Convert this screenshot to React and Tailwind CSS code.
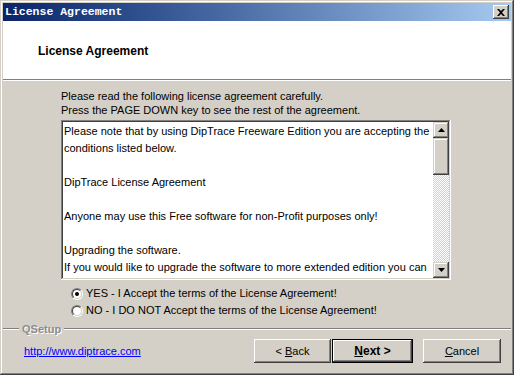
import React from "react";

const raised =
  "shadow-[inset_-1px_-1px_#404040,inset_1px_1px_#d4d0c8,inset_-2px_-2px_#808080,inset_2px_2px_#ffffff]";
const btnRaised =
  "shadow-[inset_-1px_-1px_#404040,inset_1px_1px_#ffffff,inset_-2px_-2px_#808080,inset_2px_2px_#d4d0c8]";

function CloseBtn() {
  return (
    <div className={`w-[16px] h-[14px] bg-[#d4d0c8] flex items-center justify-center ${btnRaised}`}>
      <svg width="8" height="7" viewBox="0 0 8 7">
        <path d="M0 0h2l2 2 2-2h2L5 3.5 8 7H6L4 5 2 7H0l3-3.5z" fill="#000" />
      </svg>
    </div>
  );
}

function ScrollBtn({ down }) {
  return (
    <div className={`w-[16px] h-[16px] bg-[#d4d0c8] flex items-center justify-center ${raised}`}>
      <svg width="7" height="4" viewBox="0 0 7 4">
        {down ? (
          <polygon points="0,0 7,0 3.5,4" fill="#000" />
        ) : (
          <polygon points="3.5,0 7,4 0,4" fill="#000" />
        )}
      </svg>
    </div>
  );
}

function Radio({ checked, children }) {
  return (
    <div className="h-[17px] flex items-center pl-[10px] gap-[3px]">
      <div className="w-[12px] h-[12px] rounded-full border border-t-[#808080] border-l-[#808080] border-r-white border-b-white">
        <div className="w-full h-full rounded-full border border-t-[#404040] border-l-[#404040] border-r-[#d4d0c8] border-b-[#d4d0c8] bg-white flex items-center justify-center">
          {checked && <div className="w-[4px] h-[4px] rounded-full bg-black" />}
        </div>
      </div>
      <span className="whitespace-nowrap">{children}</span>
    </div>
  );
}

function Button({ w, children, bold, isDefault }) {
  const inner = (
    <div
      className={`h-full w-full bg-[#d4d0c8] flex items-center justify-center ${btnRaised} ${
        bold ? "font-bold text-[12px]" : ""
      }`}
    >
      {children}
    </div>
  );
  if (isDefault) {
    return (
      <div className={`${w} h-[24px] border border-black`}>{inner}</div>
    );
  }
  return <div className={`${w} h-[24px]`}>{inner}</div>;
}

const lines = [
  "Please note that by using DipTrace Freeware Edition you are accepting the",
  "conditions listed below.",
  "",
  "DipTrace License Agreement",
  "",
  "Anyone may use this Free software for non-Profit purposes only!",
  "",
  "Upgrading the software.",
  "If you would like to upgrade the software to more extended edition you can",
];

export default function App() {
  return (
    <div
      className={`w-[514px] h-[375px] bg-[#d4d0c8] p-[3px] flex flex-col ${raised} font-['Liberation_Sans',Arial,sans-serif] text-[11px] text-black`}
    >
      <div className="h-[18px] shrink-0 flex items-center justify-between pl-[2px] pr-[2px] bg-linear-to-r from-[#0a246a] to-[#a6caf0]">
        <span className="font-['Liberation_Mono',monospace] font-bold text-[11.5px] text-white leading-none">
          License Agreement
        </span>
        <CloseBtn />
      </div>

      <div className="h-[58px] shrink-0 bg-white flex items-center pl-[35px] pt-[2px]">
        <span className="font-bold text-[12px]">License Agreement</span>
      </div>
      <div className="h-px shrink-0 bg-[#808080]" />
      <div className="h-px shrink-0 bg-white" />

      <div className="pl-[58px] pt-[8px] flex flex-col">
        <div className="leading-[14px] whitespace-nowrap">
          <div>Please read the following license agreement carefully.</div>
          <div>Press the PAGE DOWN key to see the rest of the agreement.</div>
        </div>

        <div className="mt-[3px] w-[390px] h-[160px] p-[2px] bg-white shadow-[inset_-1px_-1px_#ffffff,inset_1px_1px_#808080,inset_-2px_-2px_#d4d0c8,inset_2px_2px_#404040] flex">
          <div className="flex-1 pl-[1px] pt-[1px] leading-[17px] whitespace-nowrap overflow-hidden">
            {lines.map((l, i) => (
              <div key={i} className="h-[17px]">
                {l}
              </div>
            ))}
          </div>
          <div className="w-[16px] flex flex-col">
            <ScrollBtn />
            <div className={`h-[37px] bg-[#d4d0c8] ${raised}`} />
            <div className="flex-1 [background-image:repeating-conic-gradient(#d4d0c8_0%_25%,#ffffff_0%_50%)] [background-size:2px_2px]" />
            <ScrollBtn down />
          </div>
        </div>

        <div className="mt-[5px] flex flex-col">
          <Radio checked>YES - I Accept the terms of the License Agreement!</Radio>
          <Radio>NO - I DO NOT Accept the terms of the License Agreement!</Radio>
        </div>
      </div>

      <div className="mt-[3px] h-[14px] flex items-center">
        <div className="w-[16px] h-[2px] border-t border-t-[#808080] border-b border-b-white" />
        <span className="px-[3px] font-bold text-[#8c8c8c] [text-shadow:1px_1px_#ffffff]">QSetup</span>
        <div className="flex-1 h-[2px] border-t border-t-[#808080] border-b border-b-white" />
      </div>

      <div className="mt-[3px] h-[24px] flex items-center pl-[21px] pr-[10px]">
        <span className="text-[#0000ff] underline">http://www.diptrace.com</span>
        <div className="ml-auto flex items-center">
          <Button w="w-[77px]">
            <span>
              &lt; <u>B</u>ack
            </span>
          </Button>
          <div className="w-[1px]" />
          <Button w="w-[81px]" bold isDefault>
            <span>
              <u>N</u>ext &gt;
            </span>
          </Button>
          <div className="w-[10px]" />
          <Button w="w-[78px]">
            <span>
              <u>C</u>ancel
            </span>
          </Button>
        </div>
      </div>
    </div>
  );
}
